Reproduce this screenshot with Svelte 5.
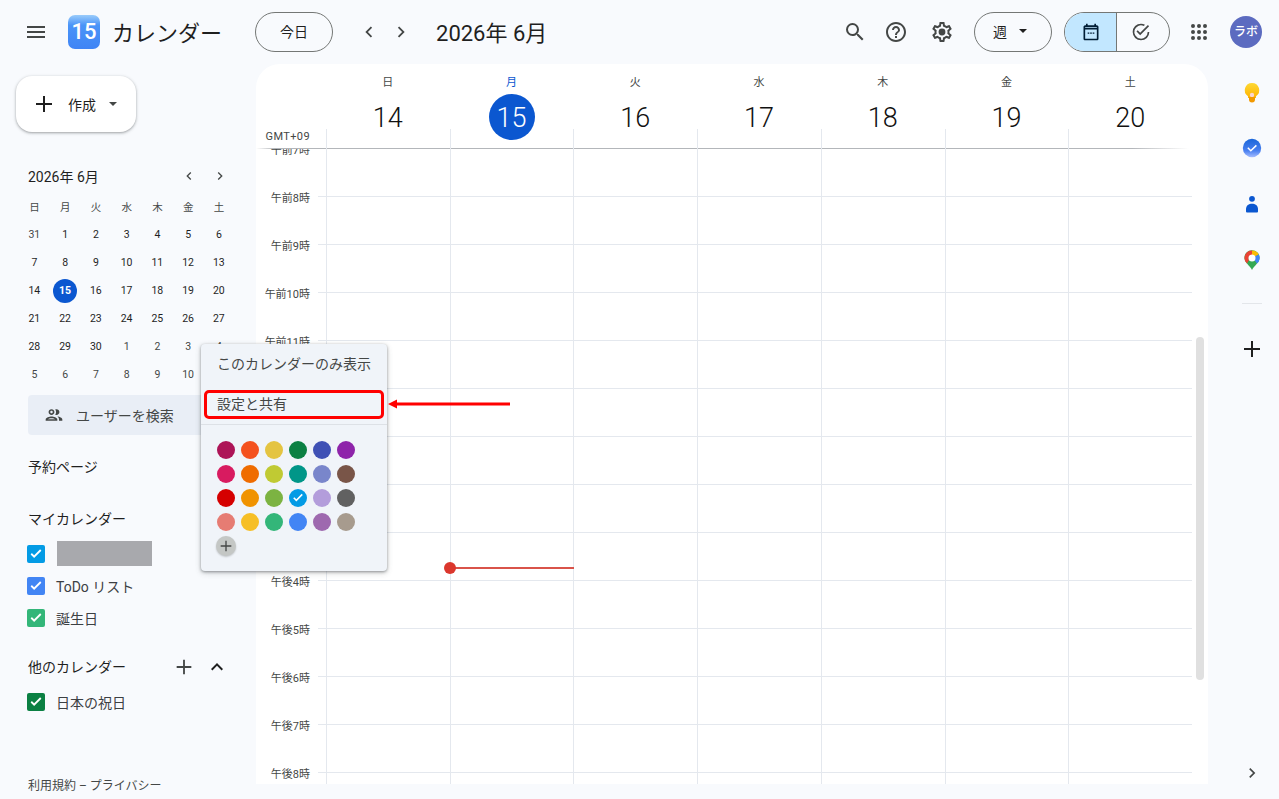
<script>
	const miniWeeks = [
		[31, 1, 2, 3, 4, 5, 6],
		[7, 8, 9, 10, 11, 12, 13],
		[14, 15, 16, 17, 18, 19, 20],
		[21, 22, 23, 24, 25, 26, 27],
		[28, 29, 30, 1, 2, 3, 4],
		[5, 6, 7, 8, 9, 10, 11]
	];
	const weekdays = ['日', '月', '火', '水', '木', '金', '土'];
	const days = [14, 15, 16, 17, 18, 19, 20];
	const hours = [
		'午前7時', '午前8時', '午前9時', '午前10時', '午前11時', '午後0時', '午後1時', '午後2時',
		'午後3時', '午後4時', '午後5時', '午後6時', '午後7時', '午後8時', '午後9時'
	];
	const swatches = [
		'#ad1457', '#f4511e', '#e4c441', '#0b8043', '#3f51b5', '#8e24aa',
		'#d81b60', '#ef6c00', '#c0ca33', '#009688', '#7986cb', '#795548',
		'#d50000', '#f09300', '#7cb342', '#039be5', '#b39ddb', '#616161',
		'#e67c73', '#f6bf26', '#33b679', '#4285f4', '#9e69af', '#a79b8e'
	];
	const myCalendars = [
		{ name: 'ToDo リスト', color: '#4285f4' },
		{ name: '誕生日', color: '#33b679' }
	];

	// other month days sit in the first and last two weeks
	function isOther(week, d) {
		return (week === 0 && d > 7) || (week >= 4 && d < 15);
	}
</script>

<div class="page">
	<header>
		<button class="icon menu" aria-label="メニュー">
			<svg viewBox="0 0 24 24" width="24" height="24"><path d="M3 18h18v-2H3v2zm0-5h18v-2H3v2zm0-7v2h18V6H3z" /></svg>
		</button>
		<div class="logo">15</div>
		<span class="product">カレンダー</span>
		<button class="pill today-btn">今日</button>
		<button class="icon chev first" aria-label="前">
			<svg viewBox="0 0 24 24" width="22" height="22"><path d="M15.4 7.4 14 6l-6 6 6 6 1.4-1.4L10.8 12z" /></svg>
		</button>
		<button class="icon chev" aria-label="次">
			<svg viewBox="0 0 24 24" width="22" height="22"><path d="M8.6 16.6 10 18l6-6-6-6-1.4 1.4L13.2 12z" /></svg>
		</button>
		<span class="title">2026年 6月</span>
		<div class="spacer"></div>
		<button class="icon tool search" aria-label="検索">
			<svg viewBox="0 0 24 24" width="24" height="24"><path d="M15.5 14h-.79l-.28-.27A6.471 6.471 0 0 0 16 9.5 6.5 6.5 0 1 0 9.5 16c1.61 0 3.09-.59 4.23-1.57l.27.28v.79l5 4.99L20.49 19l-4.99-5zm-6 0C7.01 14 5 11.99 5 9.5S7.01 5 9.5 5 14 7.01 14 9.5 11.99 14 9.5 14z" /></svg>
		</button>
		<button class="icon tool help" aria-label="ヘルプ">
			<svg viewBox="0 0 24 24" width="24" height="24"><path d="M11 18h2v-2h-2v2zm1-16C6.48 2 2 6.48 2 12s4.48 10 10 10 10-4.48 10-10S17.52 2 12 2zm0 18c-4.41 0-8-3.59-8-8s3.59-8 8-8 8 3.59 8 8-3.59 8-8 8zm0-14c-2.21 0-4 1.79-4 4h2c0-1.1.9-2 2-2s2 .9 2 2c0 2-3 1.75-3 5h2c0-2.25 3-2.5 3-5 0-2.21-1.79-4-4-4z" /></svg>
		</button>
		<button class="icon tool gear" aria-label="設定">
			<svg viewBox="0 0 24 24" width="24" height="24"><path d="M19.43 12.98c.04-.32.07-.64.07-.98 0-.34-.03-.66-.07-.98l2.11-1.65c.19-.15.24-.42.12-.64l-2-3.46c-.09-.16-.26-.25-.44-.25-.06 0-.12.01-.17.03l-2.49 1c-.52-.4-1.08-.73-1.69-.98l-.38-2.65C14.46 2.18 14.25 2 14 2h-4c-.25 0-.46.18-.49.42l-.38 2.65c-.61.25-1.17.59-1.69.98l-2.49-1c-.06-.02-.12-.03-.18-.03-.17 0-.34.09-.43.25l-2 3.46c-.13.22-.07.49.12.64l2.11 1.65c-.04.32-.07.65-.07.98 0 .33.03.66.07.98l-2.11 1.65c-.19.15-.24.42-.12.64l2 3.46c.09.16.26.25.44.25.06 0 .12-.01.17-.03l2.49-1c.52.4 1.08.73 1.69.98l.38 2.65c.03.24.24.42.49.42h4c.25 0 .46-.18.49-.42l.38-2.65c.61-.25 1.17-.59 1.69-.98l2.49 1c.06.02.12.03.18.03.17 0 .34-.09.43-.25l2-3.46c.12-.22.07-.49-.12-.64l-2.11-1.65zm-1.98-1.71c.04.31.05.52.05.73 0 .21-.02.43-.05.73l-.14 1.13.89.7 1.08.84-.7 1.21-1.27-.51-1.04-.42-.9.68c-.43.32-.84.56-1.25.73l-1.06.43-.16 1.13-.2 1.35h-1.4l-.19-1.35-.16-1.13-1.06-.43c-.43-.18-.83-.41-1.23-.71l-.91-.7-1.06.43-1.27.51-.7-1.21 1.08-.84.89-.7-.14-1.13c-.03-.31-.05-.54-.05-.74s.02-.43.05-.73l.14-1.13-.89-.7-1.08-.84.7-1.21 1.27.51 1.04.42.9-.68c.43-.32.84-.56 1.25-.73l1.06-.43.16-1.13.2-1.35h1.39l.19 1.35.16 1.13 1.06.43c.43.18.83.41 1.23.71l.91.7 1.06-.43 1.27-.51.7 1.21-1.07.85-.89.7.14 1.13z" /><circle cx="12" cy="12" r="3.4" /></svg>
		</button>
		<button class="pill view">
			<span>週</span>
			<i class="caret"></i>
		</button>
		<div class="toggle">
			<div class="seg on">
				<svg viewBox="0 0 24 24" width="20" height="20"><path d="M19 4h-1V2h-2v2H8V2H6v2H5c-1.1 0-2 .9-2 2v14c0 1.1.9 2 2 2h14c1.1 0 2-.9 2-2V6c0-1.1-.9-2-2-2zm0 16H5V9h14v11zm0-13H5V6h14v1zM8 12.5h2v1.5H8zm3 0h2v1.5h-2zm3 0h2v1.5h-2z" /></svg>
			</div>
			<div class="seg off">
				<svg viewBox="0 0 24 24" width="20" height="20"><path d="M12 2a10 10 0 1 0 10 10h-2a8 8 0 1 1-4.7-7.3l1.5-1.5A10 10 0 0 0 12 2zm8.3 1.7L11 13l-3-3-1.4 1.4L11 15.8 21.7 5.1z" /></svg>
			</div>
		</div>
		<button class="icon apps" aria-label="アプリ">
			<svg viewBox="0 0 24 24" width="24" height="24"><path d="M6 8a2 2 0 1 0 0-4 2 2 0 0 0 0 4zm6 0a2 2 0 1 0 0-4 2 2 0 0 0 0 4zm6 0a2 2 0 1 0 0-4 2 2 0 0 0 0 4zM6 14a2 2 0 1 0 0-4 2 2 0 0 0 0 4zm6 0a2 2 0 1 0 0-4 2 2 0 0 0 0 4zm6 0a2 2 0 1 0 0-4 2 2 0 0 0 0 4zM6 20a2 2 0 1 0 0-4 2 2 0 0 0 0 4zm6 0a2 2 0 1 0 0-4 2 2 0 0 0 0 4zm6 0a2 2 0 1 0 0-4 2 2 0 0 0 0 4z" /></svg>
		</button>
		<div class="avatar">ラボ</div>
	</header>

	<div class="content">
		<aside>
			<button class="create">
				<svg viewBox="0 0 24 24" width="24" height="24"><path d="M20 13h-7v7h-2v-7H4v-2h7V4h2v7h7z" /></svg>
				<span>作成</span>
				<i class="caret small"></i>
			</button>

			<div class="mini-head">
				<span>2026年 6月</span>
				<div class="mini-nav">
					<svg viewBox="0 0 24 24" width="16" height="16"><path d="M15.4 7.4 14 6l-6 6 6 6 1.4-1.4L10.8 12z" /></svg>
					<svg viewBox="0 0 24 24" width="16" height="16"><path d="M8.6 16.6 10 18l6-6-6-6-1.4 1.4L13.2 12z" /></svg>
				</div>
			</div>
			<div class="mini">
				{#each weekdays as w}
					<div class="mini-w">{w}</div>
				{/each}
				{#each miniWeeks as week, i}
					{#each week as d}
						<div class="mini-d" class:other={isOther(i, d)}>
							<span class:selected={i === 2 && d === 15}>{d}</span>
						</div>
					{/each}
				{/each}
			</div>

			<div class="people">
				<svg viewBox="0 0 24 24" width="20" height="20"><path d="M9 13.75c-2.34 0-7 1.17-7 3.5V19h14v-1.75c0-2.33-4.66-3.5-7-3.5zM4.34 17c.84-.58 2.87-1.25 4.66-1.25s3.82.67 4.66 1.25H4.34zM9 12c1.93 0 3.5-1.57 3.5-3.5S10.93 5 9 5 5.5 6.57 5.5 8.5 7.07 12 9 12zm0-5c.83 0 1.5.67 1.5 1.5S9.83 10 9 10s-1.5-.67-1.5-1.5S8.17 7 9 7zm7.04 6.81c1.16.84 1.96 1.96 1.96 3.44V19h4v-1.75c0-2.02-3.5-3.17-5.96-3.44zM15 12c1.93 0 3.5-1.57 3.5-3.5S16.93 5 15 5c-.54 0-1.04.13-1.5.35.63.89 1 1.98 1 3.15s-.37 2.26-1 3.15c.46.22.96.35 1.5.35z" /></svg>
				<span>ユーザーを検索</span>
			</div>

			<div class="section booking">予約ページ</div>
			<div class="section mine">マイカレンダー</div>

			<div class="cal-row first">
				<span class="check" style="background: #039be5">
					<svg viewBox="0 0 24 24" width="18" height="18"><path d="M9.5 17.2 4.8 12.5l1.7-1.7 3 3 8-8 1.7 1.700z" /></svg>
				</span>
				<div class="redacted"></div>
			</div>
			{#each myCalendars as cal}
				<div class="cal-row">
					<span class="check" style="background: {cal.color}">
						<svg viewBox="0 0 24 24" width="18" height="18"><path d="M9.5 17.2 4.8 12.5l1.7-1.7 3 3 8-8 1.7 1.700z" /></svg>
					</span>
					<span class="cal-name">{cal.name}</span>
				</div>
			{/each}

			<div class="section other-head">
				<span>他のカレンダー</span>
				<svg class="add" viewBox="0 0 24 24" width="22" height="22"><path d="M20 13h-7v7h-2v-7H4v-2h7V4h2v7h7z" /></svg>
				<svg class="fold" viewBox="0 0 24 24" width="24" height="24"><path d="M7.4 15.4 6 14l6-6 6 6-1.4 1.4-4.6-4.600z" /></svg>
			</div>
			<div class="cal-row holiday">
				<span class="check" style="background: #0b8043">
					<svg viewBox="0 0 24 24" width="18" height="18"><path d="M9.5 17.2 4.8 12.5l1.7-1.7 3 3 8-8 1.7 1.700z" /></svg>
				</span>
				<span class="cal-name">日本の祝日</span>
			</div>

			<div class="terms">利用規約 – プライバシー</div>
		</aside>

		<main>
			<div class="week-head">
				<div class="gmt">GMT+09</div>
				{#each days as d, i}
					<div class="day" class:current={d === 15}>
						<div class="dow">{weekdays[i]}</div>
						<div class="date">{d}</div>
					</div>
				{/each}
			</div>
			<div class="grid">
				{#each hours as h}
					<div class="row">
						<div class="hour"><span>{h}</span></div>
						<div class="tick"></div>
						{#each days as d}
							<div class="cell"></div>
						{/each}
					</div>
				{/each}
				<div class="now"><i></i></div>
			</div>
			<div class="scrollbar"></div>
		</main>

		<nav class="rail">
			<svg class="app" viewBox="0 0 24 24" width="24" height="24">
				<defs>
					<linearGradient id="keep" x1="0" y1="0" x2="0" y2="1"><stop offset="0" stop-color="#fdd835" /><stop offset="1" stop-color="#ffb300" /></linearGradient>
				</defs>
				<path d="M12 3a7.2 7.2 0 0 0-4 13.2V18h8v-1.8A7.2 7.2 0 0 0 12 3z" fill="url(#keep)" />
				<circle cx="12" cy="15" r="2.2" fill="#fbd5d0" />
				<path d="M9 17h6v2.5a3 3 0 0 1-6 0z" fill="#f29900" />
			</svg>
			<svg class="app" viewBox="0 0 24 24" width="24" height="24">
				<defs>
					<linearGradient id="tasks" x1="0" y1="0" x2="0" y2="1"><stop offset="0" stop-color="#1a66d9" /><stop offset="0.65" stop-color="#4a80f0" /><stop offset="1" stop-color="#a5bcff" /></linearGradient>
				</defs>
				<circle cx="12" cy="12" r="9.2" fill="url(#tasks)" />
				<path d="M7.8 11.8 10.8 14.8 16.4 9.4" fill="none" stroke="#fff" stroke-width="1.5" />
			</svg>
			<svg class="app" viewBox="0 0 24 24" width="24" height="24">
				<circle cx="12" cy="6.8" r="2.9" fill="#0b57d0" />
				<path d="M6 19.5v-2.4c0-3.6 2.900-5.400 6-5.400s6 1.800 6 5.400v2.400a1 1 0 0 1-1 1H7a1 1 0 0 1-1-1z" fill="#0b57d0" />
			</svg>
			<svg class="app" viewBox="0 0 24 24" width="24" height="24">
				<path d="M12 22c-1-2.2-3.200-4-5-6.400a7.600 7.600 0 1 1 10 0c-1.800 2.400-4 4.200-5 6.400z" fill="#34a853" />
				<path d="M7 15.600a7.600 7.600 0 0 1 5-13.200v4.600a3.400 3.400 0 0 0-3 5z" fill="#ea4335" />
				<path d="M12 2.400a7.600 7.600 0 0 1 6.800 4.200l-3.800 2a3.400 3.400 0 0 0-3-1.600z" fill="#fbbc04" />
				<path d="M18.800 6.600a7.600 7.600 0 0 1-1.800 9l-3-4a3.400 3.400 0 0 0 1-3z" fill="#4285f4" />
				<circle cx="12" cy="10" r="3.500" fill="#fff" />
			</svg>
			<div class="rail-sep"></div>
			<svg class="rail-add" viewBox="0 0 24 24" width="24" height="24"><path d="M20 13h-7v7h-2v-7H4v-2h7V4h2v7h7z" /></svg>
			<div class="spacer"></div>
			<svg class="rail-more" viewBox="0 0 24 24" width="20" height="20"><path d="M8.6 16.6 10 18l6-6-6-6-1.400 1.400L13.200 12z" /></svg>
		</nav>
	</div>

	<div class="popup">
		<div class="pop-item">このカレンダーのみ表示</div>
		<div class="pop-item boxed">設定と共有</div>
		<div class="pop-sep"></div>
		<div class="colors">
			{#each swatches as c, i}
				<span class="swatch" style="background: {c}">
					{#if i === 15}
						<svg viewBox="0 0 24 24" width="16" height="16"><path d="M9.500 17.200 4.800 12.500l1.700-1.700 3 3 8-8 1.700 1.700z" /></svg>
					{/if}
				</span>
			{/each}
			<span class="swatch plus">
				<svg viewBox="0 0 24 24" width="16" height="16"><path d="M20 13h-7v7h-2v-7H4v-2h7V4h2v7h7z" /></svg>
			</span>
		</div>
	</div>
	<svg class="arrow" width="124" height="12" viewBox="0 0 124 12">
		<path d="M0 6 9 1.500V4.500H122V7.500H9V10.500z" fill="#f00" />
	</svg>
</div>

<style>
	:global(body) {
		margin: 0;
		background: #f8fafd;
	}

	.page {
		position: relative;
		width: 1279px;
		height: 799px;
		overflow: hidden;
		background: #f8fafd;
		color: #1f1f1f;
		font-family: Roboto, 'Noto Sans CJK JP', sans-serif;
	}

	button {
		font-family: inherit;
		color: inherit;
		background: none;
		border: 0;
		padding: 0;
	}

	svg {
		display: block;
		flex: none;
		fill: currentColor;
	}

	.spacer {
		flex: 1;
	}

	/* top bar */
	header {
		height: 64px;
		display: flex;
		align-items: center;
		color: #444746;
	}

	.icon {
		display: flex;
		align-items: center;
		justify-content: center;
		width: 40px;
		height: 40px;
	}

	.menu {
		margin-left: 16px;
	}

	.logo {
		width: 32px;
		height: 34px;
		margin-left: 12px;
		border-radius: 7px;
		background: linear-gradient(#9accfb, #4a94f8 30%, #3f84f5);
		color: #fff;
		font-size: 22px;
		font-weight: 500;
		line-height: 34px;
		text-align: center;
	}

	.product {
		margin-left: 12px;
		padding-bottom: 2px;
		font-size: 22px;
		color: #1f1f1f;
		white-space: nowrap;
	}

	.pill {
		height: 40px;
		padding-bottom: 2px;
		border: 1px solid #747775;
		border-radius: 20px;
		box-sizing: border-box;
		font-size: 14px;
		color: #1f1f1f;
	}

	.today-btn {
		width: 78px;
		margin-left: 33px;
	}

	.chev {
		width: 32px;
		height: 32px;
	}

	.chev.first {
		margin-left: 20px;
	}

	.title {
		margin-left: 19px;
		padding-bottom: 3px;
		font-size: 22px;
		color: #1f1f1f;
		white-space: nowrap;
	}

	.tool {
		width: 42px;
	}

	.search {
		width: 40px;
	}

	.gear {
		margin-left: 4px;
		margin-right: 11px;
	}

	.view {
		width: 78px;
		display: flex;
		align-items: center;
		gap: 12px;
		padding-left: 18px;
	}

	.caret {
		width: 0;
		height: 0;
		border-left: 4px solid transparent;
		border-right: 4px solid transparent;
		border-top: 4px solid #1f1f1f;
	}

	.caret.small {
		border-top-color: #444746;
	}

	.toggle {
		display: flex;
		width: 106px;
		height: 40px;
		margin-left: 12px;
		box-sizing: border-box;
		border: 1px solid #747775;
		border-radius: 20px;
		overflow: hidden;
	}

	.seg {
		flex: 1;
		display: flex;
		align-items: center;
		justify-content: center;
	}

	.seg.on {
		background: #c2e7ff;
		border-right: 1px solid #747775;
		color: #001d35;
		padding-left: 2px;
	}

	.seg.off {
		padding-right: 4px;
	}

	.apps {
		margin-left: 9px;
	}

	.avatar {
		width: 32px;
		height: 32px;
		margin: 0 17px 0 11px;
		border-radius: 50%;
		background: #5c6bc0;
		color: #fff;
		font-size: 12px;
		font-weight: 500;
		line-height: 32px;
		text-align: center;
	}

	.content {
		display: flex;
		height: 720px;
	}

	/* left column */
	aside {
		width: 256px;
		flex: none;
		padding-left: 28px;
		box-sizing: border-box;
		position: relative;
		display: flex;
		flex-direction: column;
		height: 735px;
	}

	.create {
		display: flex;
		align-items: center;
		width: 120px;
		height: 56px;
		margin: 12px 0 0 -12px;
		padding-left: 16px;
		box-sizing: border-box;
		border-radius: 16px;
		background: #fff;
		box-shadow: 0 1px 2px rgba(60, 64, 67, 0.3), 0 1px 3px 1px rgba(60, 64, 67, 0.15);
		font-size: 14px;
	}

	.create span {
		margin: 0 13px 0 12px;
	}

	.mini-head {
		display: flex;
		align-items: center;
		justify-content: space-between;
		width: 200px;
		height: 20px;
		margin-top: 34px;
		font-size: 14px;
	}

	.mini-nav {
		display: flex;
		gap: 15px;
		color: #444746;
	}

	.mini {
		display: grid;
		grid-template-columns: repeat(7, 30.75px);
		grid-auto-rows: 27.9px;
		margin: 7px 0 0 -9px;
		font-size: 10.5px;
		text-align: center;
	}

	.mini-w {
		line-height: 30px;
		color: #444746;
	}

	.mini-d {
		display: flex;
		align-items: center;
		justify-content: center;
		color: #1f1f1f;
	}

	.mini-d.other {
		color: #444746;
	}

	.mini-d span.selected {
		display: block;
		width: 24px;
		height: 24px;
		line-height: 24px;
		border-radius: 50%;
		background: #0b57d0;
		color: #fff;
		font-weight: 700;
	}

	.people {
		display: flex;
		align-items: center;
		gap: 12px;
		width: 200px;
		height: 40px;
		margin-top: 7px;
		padding-left: 16px;
		box-sizing: border-box;
		border-radius: 4px;
		background: #e9eef6;
		color: #444746;
		font-size: 14px;
	}

	.people span {
		padding-bottom: 1px;
	}

	.section {
		font-size: 14px;
		line-height: 20px;
	}

	.booking {
		margin-top: 22px;
	}

	.mine {
		margin-top: 32px;
	}

	.cal-row {
		display: flex;
		align-items: center;
		height: 32px;
		margin-left: -1px;
		font-size: 14px;
		color: #3c4043;
	}

	.cal-row.first {
		height: 29px;
		margin-top: 12px;
		align-items: flex-start;
	}

	.cal-row.first .check {
		margin-top: 4px;
	}

	.check {
		display: flex;
		align-items: center;
		justify-content: center;
		width: 18px;
		height: 18px;
		border-radius: 2px;
		color: #fff;
	}

	.cal-name {
		margin-left: 11px;
	}

	.redacted {
		width: 95px;
		height: 25px;
		margin-left: 12px;
		background: #a8a9ad;
	}

	.other-head {
		display: flex;
		align-items: center;
		height: 24px;
		margin-top: 21px;
	}

	.add {
		margin-left: 47px;
		color: #444746;
	}

	.fold {
		margin-left: 10px;
	}

	.holiday {
		margin-top: 7px;
	}

	.terms {
		margin-top: auto;
		margin-bottom: 6px;
		font-size: 12px;
		color: #444746;
	}

	/* week grid */
	main {
		position: relative;
		width: 952px;
		flex: none;
		display: flex;
		flex-direction: column;
		border-radius: 24px 24px 0 0;
		background: #fff;
		overflow: hidden;
	}

	.week-head {
		position: relative;
		z-index: 1;
		flex: none;
		display: grid;
		grid-template-columns: 70px repeat(7, 1fr);
		height: 85px;
		padding-right: 16px;
		box-sizing: border-box;
		background-image: linear-gradient(90deg, #fff, #b3b6ba 2%, #b3b6ba 92%, #fff 98%);
		background-size: 100% 1px;
		background-position: bottom;
		background-repeat: no-repeat;
	}

	.gmt {
		align-self: end;
		margin-bottom: 6px;
		padding-right: 16px;
		font-size: 11px;
		letter-spacing: 0.4px;
		text-align: right;
		color: #444746;
	}

	.day {
		position: relative;
		text-align: center;
	}

	.day::before {
		content: '';
		position: absolute;
		left: 0;
		bottom: 0;
		height: 20px;
		border-left: 1px solid #e4e8ee;
	}

	.dow {
		margin-top: 12px;
		font-size: 11px;
		line-height: 14px;
		color: #444746;
	}

	.date {
		width: 46px;
		height: 46px;
		margin: 4px auto 0;
		border-radius: 50%;
		font-size: 27px;
		font-weight: 300;
		line-height: 48px;
		color: #111;
	}

	.current .dow {
		color: #0b57d0;
	}

	.current .date {
		background: #0b57d0;
		color: #fff;
	}

	.grid {
		position: relative;
		flex: 1;
		margin-top: -1px;
		overflow: hidden;
		padding-right: 16px;
	}

	.row {
		display: grid;
		grid-template-columns: 62px 8px repeat(7, 1fr);
		height: 48px;
	}

	.hour {
		position: relative;
		font-size: 11px;
		color: #444746;
		text-align: right;
		padding-right: 8px;
	}

	.hour span {
		position: relative;
		top: -5px;
		display: block;
		line-height: 16px;
	}

	.tick,
	.cell {
		border-top: 1px solid #e4e8ee;
	}

	.cell {
		border-left: 1px solid #e4e8ee;
	}

	.now {
		position: absolute;
		left: 193.7px;
		top: 419px;
		width: 124px;
		border-top: 2px solid #d9534a;
	}

	.now i {
		position: absolute;
		left: -6px;
		top: -7px;
		width: 12px;
		height: 12px;
		border-radius: 50%;
		background: #db372d;
	}

	.scrollbar {
		position: absolute;
		right: 4px;
		top: 273px;
		width: 8px;
		height: 343px;
		border-radius: 4px;
		background: #e0e0e0;
	}

	/* right rail */
	.rail {
		flex: 1;
		display: flex;
		flex-direction: column;
		align-items: center;
		color: #1f1f1f;
		padding: 16px 0 0 17px;
	}

	.app {
		margin-bottom: 32px;
	}

	.rail-sep {
		width: 20px;
		margin-top: -1px;
		border-top: 1px solid #e3e6ea;
	}

	.rail-add {
		margin-top: 33px;
	}

	.rail-more {
		margin-bottom: 1px;
		color: #444746;
	}

	/* calendar menu */
	.popup {
		position: absolute;
		left: 201px;
		top: 344px;
		width: 186px;
		height: 227px;
		border-radius: 4px;
		background: #f0f4f9;
		box-shadow: 0 1px 3px rgba(60, 64, 67, 0.5), 0 2px 6px rgba(60, 64, 67, 0.2);
		font-size: 14px;
		color: #444746;
	}

	.pop-item {
		height: 40px;
		line-height: 40px;
		padding-left: 16px;
	}

	.boxed {
		height: 29px;
		line-height: 22px;
		margin: 6px 3px 0;
		padding-left: 10px;
		box-sizing: border-box;
		border: 3px solid #f00;
		border-radius: 5px;
	}

	.pop-sep {
		margin-top: 5px;
		border-top: 1px solid #dde1e6;
	}

	.colors {
		display: grid;
		grid-template-columns: repeat(6, 24px);
		grid-auto-rows: 24px;
		margin: 13px 0 0 13px;
	}

	.swatch {
		display: flex;
		align-items: center;
		justify-content: center;
		width: 18px;
		height: 18px;
		margin: 3px;
		border-radius: 50%;
		color: #fff;
	}

	.swatch.plus {
		width: 20px;
		height: 20px;
		margin: 2px;
		background: #c4c7c5;
		color: #444746;
		box-shadow: 0 1px 2px rgba(0, 0, 0, 0.2);
	}

	.arrow {
		position: absolute;
		left: 388px;
		top: 398px;
	}
</style>
